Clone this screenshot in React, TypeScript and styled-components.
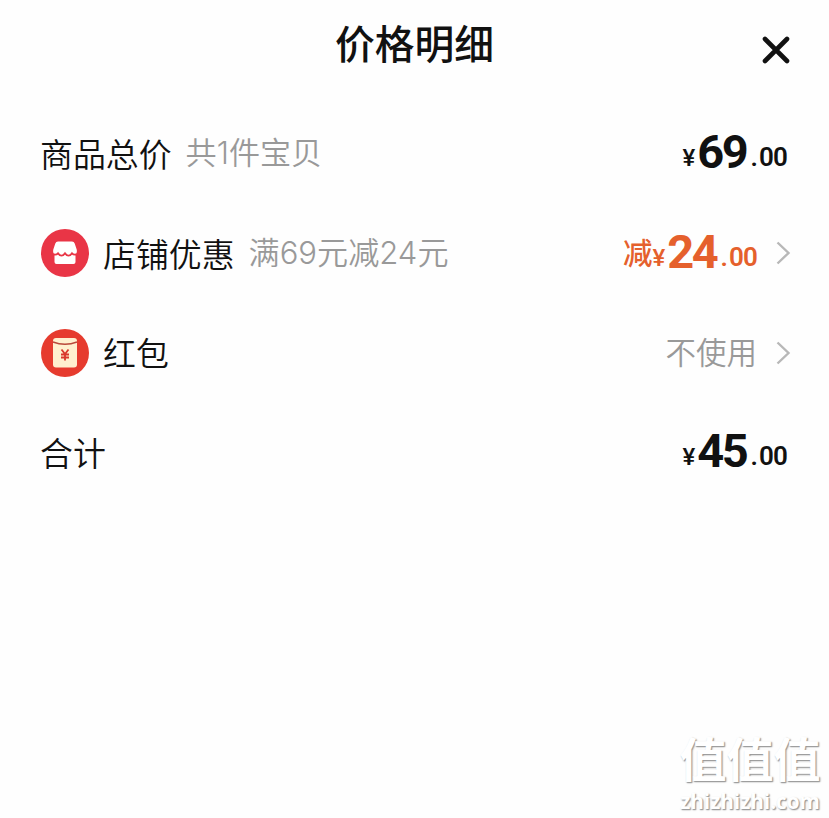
import { ReactNode } from "react"
import styled, { createGlobalStyle } from "styled-components"

const GlobalStyle = createGlobalStyle`
  * {
    box-sizing: border-box;
  }
  body {
    margin: 0;
    background: #fefefe;
    color: #111;
    font-family: Inter, "Noto Sans CJK SC", sans-serif;
  }
`

const Sheet = styled.main`
  height: 818px;
  display: flex;
  flex-direction: column;
  overflow: hidden;
`

const SheetHeader = styled.header`
  height: 103px;
  padding: 0 38px;
  display: grid;
  grid-template-columns: 30px 1fr 30px;
  align-items: start;
`

const Title = styled.h1`
  grid-column: 2;
  margin: 13px 0 0;
  font: 500 39.8px/58px "Noto Sans CJK SC", sans-serif;
  text-align: center;
`

const CloseButton = styled.button`
  margin: 35px 0 0;
  padding: 0;
  width: 30px;
  height: 30px;
  border: 0;
  background: none;
  color: #111;

  svg {
    display: block;
  }
`

const Rows = styled.div`
  flex: 1;
  padding: 0 42px 0 40px;
`

const RowStyle = styled.div<{ $link?: boolean }>`
  height: 99.7px;
  margin-right: ${p => p.$link ? "-4px" : "0"};
  display: flex;
  flex-direction: row;
  align-items: center;
`

const Badge = styled.svg`
  width: 48px;
  height: 48px;
  margin: 1px 14px 0 1px;
  flex: none;
`

const Label = styled.span`
  font: 350 32.9px/48px "Noto Sans CJK SC", sans-serif;
`

const Hint = styled.span`
  margin-left: 14px;
  color: #999;
  font-size: 31.1px;
  font-weight: 350;
  line-height: 46px;
`

const RowEnd = styled.div`
  margin-left: auto;
  display: flex;
  align-items: center;
`

const PriceStyle = styled.span<{ $color: string }>`
  margin-top: 8px;
  color: ${p => p.$color};
  font-family: Roboto, "Noto Sans CJK SC", sans-serif;
  line-height: 56px;
  white-space: nowrap;
`

const Prefix = styled.span`
  font-size: 29.5px;
  font-weight: 500;
  line-height: 40px;
  vertical-align: 2px;
`

const Currency = styled.span`
  margin-right: 2px;
  font-size: 24px;
  font-weight: 500;
`

const Whole = styled.span`
  font-size: 47px;
  font-weight: 700;
  letter-spacing: -2.3px;
  vertical-align: -2px;
`

const Point = styled.span`
  margin: 0 1px 0 4px;
  font-size: 26px;
  font-weight: 600;
`

const Cents = styled.span`
  font-size: 26px;
  font-weight: 600;
  letter-spacing: -0.8px;
`

const Unused = styled.span`
  color: #999;
  font: 350 30.5px/46px "Noto Sans CJK SC", sans-serif;
  margin-top: -2px;
`

const Arrow = styled.svg`
  width: 15px;
  height: 24px;
  margin: 1px 0 0 19px;
`

const Watermark = styled.footer`
  width: 150px;
  margin: 0 4px 4px auto;
  color: #fff;
  text-align: center;
  text-shadow: 1px 1px 1px #999, 1px 1px 2px #bbb;
`

const WatermarkName = styled.div`
  font: 700 47px/64px "Noto Sans CJK SC", sans-serif;
`

const WatermarkSite = styled.div`
  font: 700 20.7px/25px "Open Sans", sans-serif;
`

interface PriceProps {
  whole: string
  color?: string
  prefix?: string
}

function Price({ whole, color = "#111", prefix }: PriceProps) {
  return (
    <PriceStyle $color={color}>
      {prefix && <Prefix>{prefix}</Prefix>}
      <Currency>¥</Currency>
      <Whole>{whole}</Whole>
      <Point>.</Point>
      <Cents>00</Cents>
    </PriceStyle>
  )
}

interface RowProps {
  icon?: ReactNode
  label: string
  hint?: string
  link?: boolean
  children: ReactNode
}

function Row({ icon, label, hint, link, children }: RowProps) {
  return (
    <RowStyle $link={link}>
      {icon}
      <Label>{label}</Label>
      {hint && <Hint>{hint}</Hint>}
      <RowEnd>
        {children}
        {link && (
          <Arrow viewBox="0 0 15 24" fill="none" stroke="#b8b8b8" strokeWidth="2.4">
            <path d="M1.5 1.5 12.5 12 1.5 22.5" />
          </Arrow>
        )}
      </RowEnd>
    </RowStyle>
  )
}

function ShopBadge() {
  return (
    <Badge viewBox="0 0 48 48">
      <circle cx="24" cy="24" r="24" fill="#e93546" />
      <path fill="#fff" d="M17 12.500h14q2 0 2.700 2l2 6q.7 3.500-1.200 5V33q0 2-2 2h-17q-2 0-2-2v-7.500q-1.900-1.500-1.200-5l2-6q.7-2 2.700-2z" />
      <path fill="none" stroke="#e93546" strokeWidth="1.800" d="M11.500 25.500h1.500q2.500.5 4-1.200 1.700 2.400 3.500 2.400t3.500-2.400q1.700 2.400 3.500 2.400t3.500-2.400q1.500 1.700 4 1.200h1.500" />
    </Badge>
  )
}

function RedPacketBadge() {
  return (
    <Badge viewBox="0 0 48 48">
      <circle cx="24" cy="24" r="24" fill="#e63b2e" />
      <rect x="12" y="9" width="24" height="29.500" rx="3" fill="#fff0cf" />
      <path d="M12 13q12 4.500 24 0" fill="none" stroke="#b9483a" strokeWidth="1.400" />
      <path d="m20.500 20.500 3.500 4.500 3.500-4.500M20 25.500h8M20 28.500h8M24 25V31.500" fill="none" stroke="#d9382d" strokeWidth="1.800" />
    </Badge>
  )
}

export default function App() {
  return (
    <Sheet>
      <GlobalStyle />
      <SheetHeader>
        <Title>价格明细</Title>
        <CloseButton aria-label="关闭">
          <svg width="30" height="30" viewBox="0 0 30 30" stroke="currentColor" strokeWidth="4.600" strokeLinecap="round">
            <path d="m4 4 22 22M26 4 4 26" />
          </svg>
        </CloseButton>
      </SheetHeader>
      <Rows>
        <Row label="商品总价" hint="共1件宝贝">
          <Price whole="69" />
        </Row>
        <Row icon={<ShopBadge />} label="店铺优惠" hint="满69元减24元" link>
          <Price whole="24" prefix="减" color="#e5602c" />
        </Row>
        <Row icon={<RedPacketBadge />} label="红包" link>
          <Unused>不使用</Unused>
        </Row>
        <Row label="合计">
          <Price whole="45" />
        </Row>
      </Rows>
      <Watermark>
        <WatermarkName>值值值</WatermarkName>
        <WatermarkSite>zhizhizhi.com</WatermarkSite>
      </Watermark>
    </Sheet>
  )
}
